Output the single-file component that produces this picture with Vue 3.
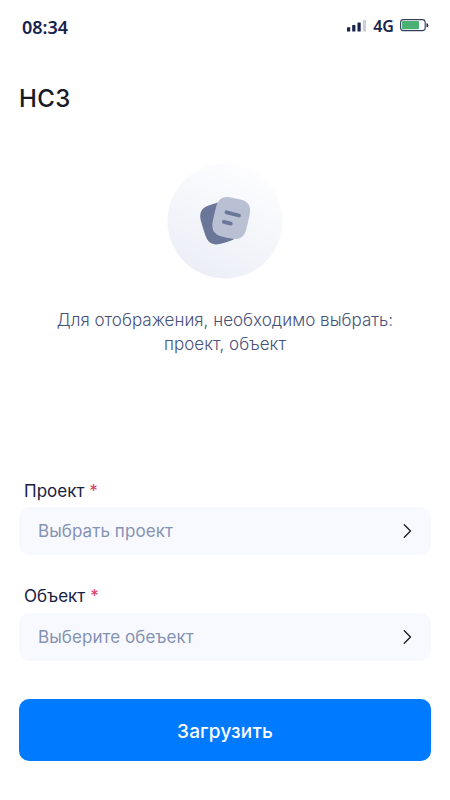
<script setup>
const fields = [
  { id: 'project', label: 'Проект', placeholder: 'Выбрать проект' },
  { id: 'object', label: 'Объект', placeholder: 'Выберите обеъект' }
]
</script>

<template>
  <main class="screen">
    <header class="status">
      <span class="time">08:34</span>
      <div class="indicators">
        <svg class="signal" width="20" height="13" viewBox="0 0 20 13">
          <rect x="0" y="8.300" width="3.200" height="4.200" rx=".5" fill="#17224d" />
          <rect x="5.200" y="6" width="3.200" height="6.500" rx=".5" fill="#17224d" />
          <rect x="10.500" y="3.500" width="3.200" height="9" rx=".5" fill="#17224d" />
          <rect x="15.800" y="1" width="3.200" height="11.500" rx=".5" fill="#cbcdda" />
        </svg>
        <span class="network">4G</span>
        <svg class="battery" width="30" height="13" viewBox="0 0 30 13">
          <rect x=".6" y=".6" width="24.600" height="11" rx="2.8" fill="#fff" stroke="#35405f" stroke-width="1.1" />
          <rect x="2" y="2" width="17" height="8.200" rx="1" fill="#4caf73" />
          <path d="M26.500 4.200h.5q1.200 0 1.200 2t-1.200 2h-.5z" fill="#17224d" />
        </svg>
      </div>
    </header>

    <h1 class="title">НСЗ</h1>

    <section class="empty">
      <svg class="picture" width="116" height="116" viewBox="0 0 116 116">
        <defs>
          <linearGradient id="disc" x1=".25" y1="1" x2=".75" y2="0">
            <stop offset="0" stop-color="#ebeef6" />
            <stop offset="1" stop-color="#fefeff" />
          </linearGradient>
          <path id="card" d="M-6-20Q0-20.300 6-20C13-19.600 16.900-15.500 17.200-8Q17.500 0 17.200 8C16.900 15.500 13 19.600 6 20Q0 20.300-6 20C-13 19.600-16.900 15.500-17.200 8Q-17.500 0-17.200-8C-16.900-15.500-13-19.600-6-20Z" />
        </defs>
        <circle cx="58" cy="58" r="57.500" fill="url(#disc)" />
        <use href="#card" transform="translate(52.600 60.100) rotate(-17)" fill="#6a7799" />
        <use href="#card" transform="translate(64.200 55) rotate(13)" fill="#bac0d3" />
        <path d="M59.500 49.300l12.500 3.200M56.800 58.900l7 1.700" stroke="#6a7799" stroke-width="3.800" stroke-linecap="round" />
      </svg>
      <p class="message">Для отображения, необходимо выбрать:<br />проект, объект</p>
    </section>

    <form class="form" @submit.prevent>
      <div v-for="field in fields" :key="field.id" class="field">
        <span class="label">{{ field.label }} <span class="required">*</span></span>
        <button type="button" class="select">
          <span>{{ field.placeholder }}</span>
          <svg width="9" height="16" viewBox="0 0 9 16">
            <path d="M1.300 1.800L7.500 8l-6.200 6.200" fill="none" stroke="#171a22" stroke-width="1.300" stroke-linecap="round" stroke-linejoin="round" />
          </svg>
        </button>
      </div>
      <button type="submit" class="submit">Загрузить</button>
    </form>
  </main>
</template>

<style>
body {
  margin: 0;
  background: #fff;
}
</style>

<style scoped>
.screen {
  box-sizing: border-box;
  width: 450px;
  height: 800px;
  padding: 0 19px;
  display: flex;
  flex-direction: column;
  background: #fff;
  font-family: Inter, sans-serif;
}

.status {
  display: flex;
  justify-content: space-between;
  align-items: flex-start;
  height: 84px;
  padding: 15px 1px 0 3px;
  box-sizing: border-box;
  color: #17224d;
  font-family: "Noto Sans", sans-serif;
  font-weight: 600;
}

.time {
  font-size: 18px;
  line-height: 24px;
}

.indicators {
  display: flex;
  align-items: center;
  height: 21px;
}

.network {
  margin-left: 6px;
  font-size: 16px;
  line-height: 20px;
}

.battery {
  margin-left: 6px;
}

.title {
  margin: 0;
  font-size: 24px;
  line-height: 30px;
  font-weight: 500;
  letter-spacing: 0.4px;
  color: #171a22;
}

.empty {
  display: flex;
  flex-direction: column;
  align-items: center;
  margin-top: 49px;
}

.message {
  margin: 29px 0 0;
  text-align: center;
  white-space: nowrap;
  font-size: 17px;
  line-height: 24px;
  font-weight: 300;
  letter-spacing: 0.02px;
  color: #46527a;
}

.form {
  display: flex;
  flex-direction: column;
  margin-top: 123px;
}

.field {
  display: flex;
  flex-direction: column;
}

.field + .field {
  margin-top: 29px;
}

.field + .field .label {
  height: 29px;
}

.label {
  padding-left: 5px;
  height: 28px;
  line-height: 24px;
  font-size: 17px;
  letter-spacing: 0.04px;
  color: #17203f;
}

.required {
  color: #e0355f;
}

.select {
  display: flex;
  justify-content: space-between;
  align-items: center;
  height: 48px;
  padding: 0 19px;
  border: 0;
  border-radius: 10px;
  background: #f8f9fe;
  color: #8492b4;
  font: 400 17px/24px Inter, sans-serif;
  letter-spacing: 0.07px;
}

.submit {
  height: 62px;
  margin-top: 38px;
  padding: 3px 0 0;
  border: 0;
  border-radius: 10px;
  background: #007aff;
  color: #fff;
  font: 500 19px/26px Inter, sans-serif;
  letter-spacing: 0.15px;
}
</style>
